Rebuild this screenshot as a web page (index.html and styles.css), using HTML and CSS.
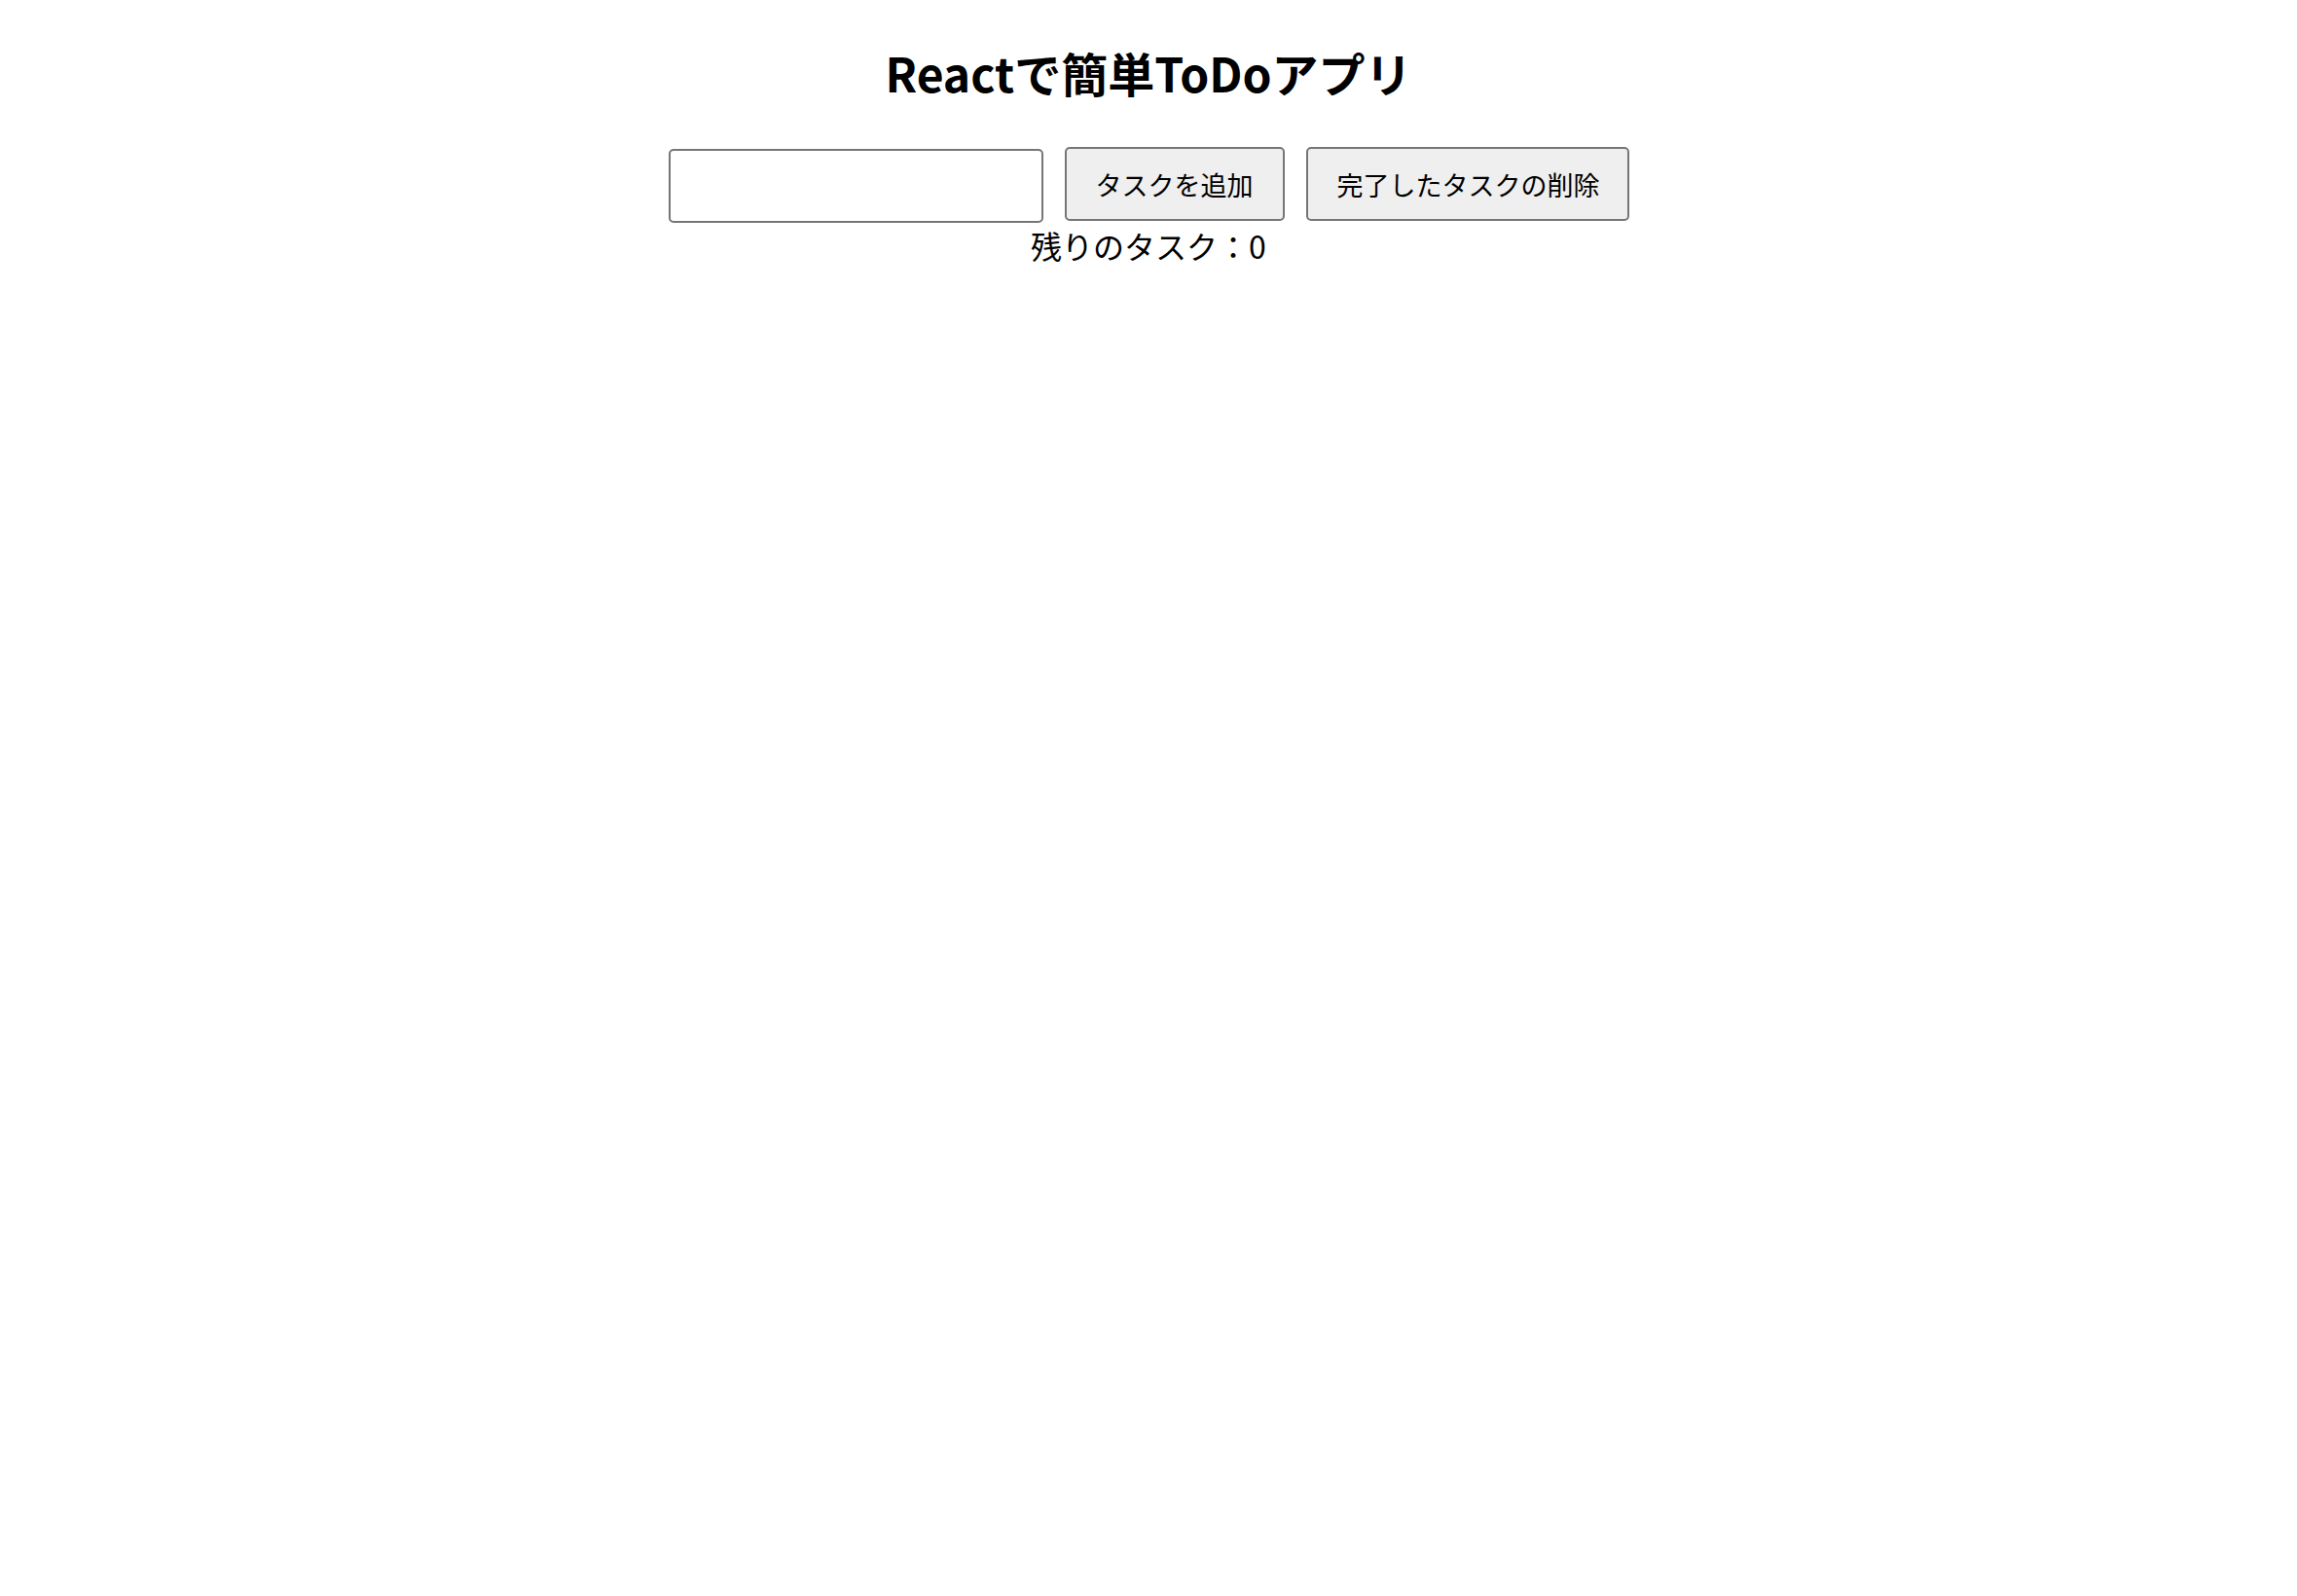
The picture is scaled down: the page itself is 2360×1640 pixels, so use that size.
FILE: index.html
```html
<!DOCTYPE html>
<html lang="ja">
<head>
<meta charset="utf-8">
<title>Reactで簡単ToDoアプリ</title>
<link rel="stylesheet" href="styles.css">
</head>
<body>
<div class="app">
  <h1 class="title">Reactで簡単ToDoアプリ</h1>
  <div class="form-row">
    <input class="task-input" type="text">
    <button class="btn btn-add">タスクを追加</button>
    <button class="btn btn-clear">完了したタスクの削除</button>
  </div>
  <div class="remaining">残りのタスク：0</div>
</div>
</body>
</html>
```
FILE: styles.css
```css
html, body {
  margin: 0;
  padding: 0;
  background: #ffffff;
}
body {
  font-family: "Noto Sans CJK JP", "Noto Sans", sans-serif;
  color: #000000;
}
.app {
  display: flex;
  flex-direction: column;
  align-items: center;
}
.title {
  margin: 39px 0 0 0;
  font-size: 48px;
  font-weight: 700;
  line-height: 70px;
}
.form-row {
  margin-top: 42px;
  display: flex;
  justify-content: center;
  align-items: flex-start;
  gap: 22px;
}
.task-input {
  box-sizing: border-box;
  width: 385px;
  height: 76px;
  margin: 2px 0 0 0;
  border: 2px solid #767676;
  border-radius: 5px;
  background: #ffffff;
  font-family: inherit;
  font-size: 27px;
  padding: 0 6px;
}
.btn {
  box-sizing: border-box;
  height: 76px;
  margin: 0;
  padding: 0 30px;
  border: 2px solid #767676;
  border-radius: 5px;
  background: #efefef;
  color: #000000;
  font-family: "Noto Sans CJK JP", "Noto Sans", sans-serif;
  font-size: 27px;
  line-height: 1;
  white-space: nowrap;
}
.btn-add {
  width: 226px;
}
.btn-clear {
  width: 332px;
}
.remaining {
  font-size: 32px;
  line-height: 46px;
  margin-top: 0;
}
```
